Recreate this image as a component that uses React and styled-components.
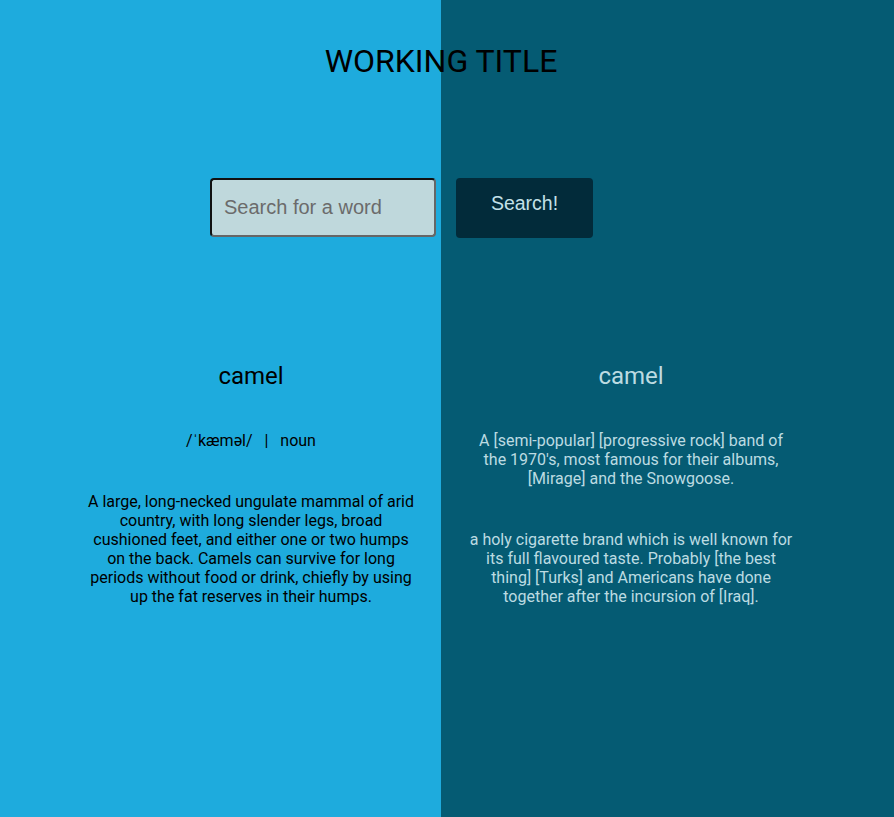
import React from "react";
import styled, { createGlobalStyle } from "styled-components";

const GlobalStyle = createGlobalStyle`
  html, body { margin: 0; padding: 0; }
  body { font-family: Roboto, "Liberation Sans", sans-serif; }
`;

const Page = styled.div`
  min-height: 817px;
  background: linear-gradient(to right, #1eabdd 0, #1eabdd 441px, #055b73 441px, #055b73 100%);
`;

const Container = styled.div`
  width: 760px;
  margin-left: 61px;
`;

const Title = styled.h1`
  margin: 0;
  padding-top: 42px;
  font-family: Roboto, sans-serif;
  font-weight: 400;
  font-size: 32px;
  line-height: 38px;
  text-align: center;
  color: #000;
`;

const SearchRow = styled.form`
  display: grid;
  grid-template-columns: 380px 380px;
  margin-top: 98px;
`;

const SearchInput = styled.input`
  justify-self: end;
  margin-right: 5px;
  box-sizing: border-box;
  width: 226px;
  height: 59px;
  padding: 0 12px;
  background: #bfd8dc;
  border: 2px solid;
  border-color: #111 #666 #666 #111;
  border-radius: 4px;
  font-family: "Liberation Sans", Arial, sans-serif;
  font-size: 20px;
  color: #222;
  outline: none;
  &::placeholder { color: #6b6b6b; }
`;

const SearchButton = styled.button`
  justify-self: start;
  align-self: start;
  margin-left: 15px;
  box-sizing: border-box;
  width: 137px;
  height: 60px;
  padding: 0 0 10px;
  text-align: center;
  background: #022b3a;
  border: none;
  border-radius: 4px;
  color: #c3e1e8;
  font-family: "Liberation Sans", Arial, sans-serif;
  font-size: 19.5px;
  line-height: 22px;
`;

const Columns = styled.div`
  display: grid;
  grid-template-columns: 380px 380px;
  margin-top: 124px;
`;

const Column = styled.section`
  display: flex;
  flex-direction: column;
  align-items: center;
  gap: 42px;
  padding: 0 26px;
  color: ${(p) => (p.$dark ? "#bcdbe2" : "#000")};
`;

const Word = styled.h2`
  margin: 0 0 -1px;
  font-weight: 400;
  font-size: 24px;
  line-height: 28px;
  text-align: center;
`;

const Text = styled.p`
  margin: 0;
  font-size: 16px;
  line-height: 19px;
  text-align: center;
`;

const Pron = styled(Text)`
  white-space: pre;
`;

export default function App() {
  return (
    <>
      <GlobalStyle />
      <Page>
        <Container>
          <Title>WORKING TITLE</Title>
          <SearchRow onSubmit={(e) => e.preventDefault()}>
            <SearchInput placeholder="Search for a word" />
            <SearchButton type="submit">Search!</SearchButton>
          </SearchRow>
          <Columns>
            <Column>
              <Word>camel</Word>
              <Pron>{"/ˈkæməl/   |   noun"}</Pron>
              <Text>
                A large, long-necked ungulate mammal of arid country, with long slender legs,
                broad cushioned feet, and either one or two humps on the back. Camels can
                survive for long periods without food or drink, chiefly by using up the fat
                reserves in their humps.
              </Text>
            </Column>
            <Column $dark>
              <Word>camel</Word>
              <Text>
                A [semi-popular] [progressive rock] band of the 1970's, most famous for their
                albums, [Mirage] and the Snowgoose.
              </Text>
              <Text>
                a holy cigarette brand which is well known for its full flavoured taste.
                Probably [the best thing] [Turks] and Americans have done together after the
                incursion of [Iraq].
              </Text>
            </Column>
          </Columns>
        </Container>
      </Page>
    </>
  );
}
